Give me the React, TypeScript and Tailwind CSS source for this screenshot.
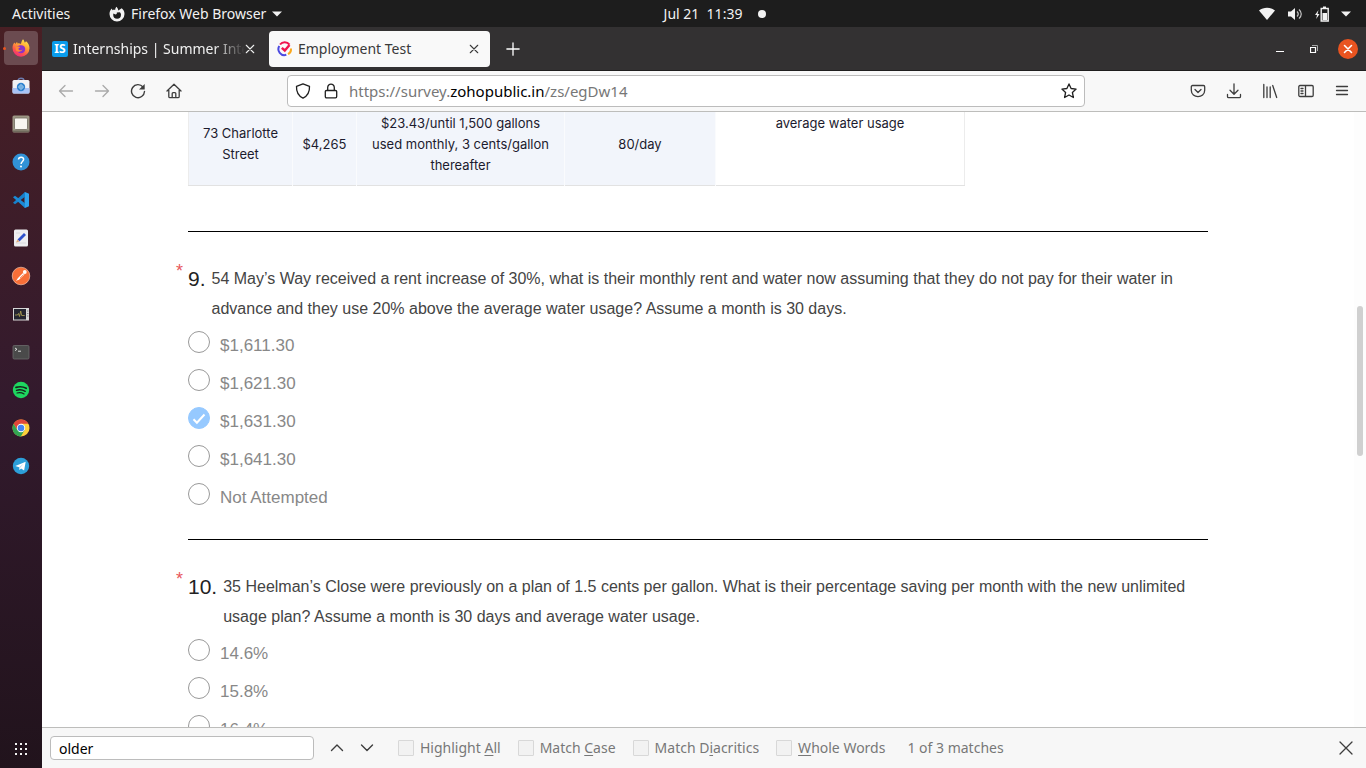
import { useState, type ReactNode } from "react";

const ubuntu = "font-['Noto_Sans','Open_Sans',sans-serif]";
const arial = "font-['Liberation_Sans',Arial,sans-serif]";

/* ---------- dock icons ---------- */

function FirefoxIcon() {
  return (
    <svg width="20" height="20" viewBox="0 0 20 20">
      <defs>
        <linearGradient id="fx" x1="0.8" y1="0" x2="0.3" y2="1">
          <stop offset="0" stopColor="#fff04a" />
          <stop offset="0.4" stopColor="#ffa436" />
          <stop offset="0.7" stopColor="#ff5a4a" />
          <stop offset="1" stopColor="#f02a7c" />
        </linearGradient>
      </defs>
      <path
        d="M12 1.2c1 1.2 1.5 2.2 1.6 3.4 1.4-.3 1.2-1 1.2-1.6 2.400 2 3.700 4.500 3.700 7.300A8.500 8.500 0 1 1 1.500 10c0-2.600.8-4.300 2-5.600l.9 1.500c.4-1 1-1.500 1.800-2l.2 1.500c1.500-.4 2.700 0 3.500.7.400-1.700.6-3.200 2.100-4.900z"
        fill="url(#fx)"
      />
      <path d="M5.500 8.500 9 7.300c3-.6 5.200 1.200 5.200 3.700A4.300 4.300 0 0 1 10 15.200c-2.500 0-4.400-1.800-4.500-4.200z" fill="#8a32c9" />
      <path d="M4.500 8.300c2.200-.2 3 .1 4.700.7-.4 1-1.600 1-1.800 1.900.4 1.500 2.600 1.700 4 .7-.8 2.300-4.600 3.200-6.500.6z" fill="#ff8a35" />
    </svg>
  );
}

function BagIcon() {
  return (
    <svg width="20" height="20" viewBox="0 0 20 20">
      <path d="M7 4.500C7 1.500 13 1.500 13 4.500" fill="none" stroke="#6d7cae" strokeWidth="1.300" />
      <rect x="1.500" y="4" width="17" height="13.500" rx="1.500" fill="#f1f2f5" />
      <path d="M1.500 12h17v4a1.500 1.500 0 0 1-1.500 1.500H3A1.500 1.500 0 0 1 1.500 16z" fill="#a9c3f5" />
      <circle cx="10" cy="11" r="4.200" fill="#2f83cf" />
      <circle cx="10" cy="11" r="2" fill="none" stroke="#a8d0f0" strokeWidth=".7" />
      <path d="M10 8v6M7 11h6" stroke="#a8d0f0" strokeWidth=".7" />
    </svg>
  );
}

function FilesIcon() {
  return (
    <svg width="20" height="20" viewBox="0 0 20 20">
      <rect x="1.500" y="1.500" width="17" height="17" rx="1.500" fill="#9b9583" />
      <rect x="2" y="16.500" width="16" height="1.500" fill="#6f6a5c" />
      <rect x="3.500" y="4" width="13" height="11.500" rx="1.200" fill="#f8f6f1" stroke="#716c60" strokeWidth=".8" />
    </svg>
  );
}

function HelpIcon() {
  return (
    <svg width="20" height="20" viewBox="0 0 20 20">
      <circle cx="10" cy="10" r="8.500" fill="#3192d8" />
      <path d="M7.500 7.500C7.700 4.300 13 4.500 12.600 7.700c-.2 1.700-2.500 2-2.500 4.300" fill="none" stroke="#fff" strokeWidth="1.500" />
      <circle cx="10" cy="14.500" r="1" fill="#fff" />
    </svg>
  );
}

function CodeIcon() {
  return (
    <svg width="20" height="20" viewBox="0 0 20 20">
      <path d="M14 2 18 3.800v12.400L14 18l-.5-.8V2.800z" fill="#2ea3ec" />
      <path d="M14 2v4.700L4 14.300l-2-1.600z" fill="#1681cc" />
      <path d="M14 18v-4.700L4 5.700 2 7.300z" fill="#1b8bd6" />
    </svg>
  );
}

function EditorIcon() {
  return (
    <svg width="20" height="20" viewBox="0 0 20 20">
      <rect x="3" y="1.500" width="14" height="17" rx="1.500" fill="#eeeef0" />
      <path d="M5 15h10M5 5h4" stroke="#d3d3d8" strokeWidth=".8" />
      <path d="m6.500 11.500 6.500-6.500 2 2-6.500 6.500z" fill="#2f52cc" />
      <path d="m5 14.500 1.500-3 2 2z" fill="#e2a979" />
    </svg>
  );
}

function PostmanIcon() {
  return (
    <svg width="20" height="20" viewBox="0 0 20 20">
      <circle cx="10" cy="10" r="8.800" fill="#f86f38" stroke="#ffd3bd" strokeWidth=".6" />
      <path d="m5 15 2-3 5-5 1.500 1.500-5 4.700z" fill="#fff" />
      <circle cx="13.800" cy="6" r="1.900" fill="#fff" />
      <path d="m9 12 3.500-3.500" stroke="#f86f38" strokeWidth=".7" />
    </svg>
  );
}

function MonitorIcon() {
  return (
    <svg width="20" height="20" viewBox="0 0 20 20">
      <rect x="2" y="4" width="16" height="12.500" fill="#d8d8d8" />
      <rect x="3" y="5" width="12" height="10.500" fill="#252631" />
      <path d="M4 11h2.500l1-1.500 1 3L9.700 7l1 4.500h3" fill="none" stroke="#b3a653" strokeWidth=".8" />
      <path d="M16 7h1.500M16 9.500h1.500M16 12h1.500" stroke="#77777b" strokeWidth=".8" />
    </svg>
  );
}

function TerminalIcon() {
  return (
    <svg width="20" height="20" viewBox="0 0 20 20">
      <rect x="2" y="3.500" width="16" height="13.500" rx="1.200" fill="#4a4a4a" stroke="#6c6c6c" strokeWidth=".8" />
      <path d="m4 6 2 1.300L4 8.600M7 9.200h3" fill="none" stroke="#eee" strokeWidth=".9" />
    </svg>
  );
}

function SpotifyIcon() {
  return (
    <svg width="20" height="20" viewBox="0 0 20 20">
      <circle cx="10" cy="10" r="8.200" fill="#1ed760" />
      <g fill="none" stroke="#15251b" strokeLinecap="round">
        <path d="M5 7.400c3.300-1 7.300-.7 10.200.9" strokeWidth="1.700" />
        <path d="M5.500 10.300c2.800-.8 6.200-.4 8.700 1" strokeWidth="1.400" />
        <path d="M6 13c2.400-.6 5-.3 7.100.9" strokeWidth="1.100" />
      </g>
    </svg>
  );
}

function ChromeIcon() {
  return (
    <svg width="20" height="20" viewBox="0 0 20 20">
      <circle cx="10" cy="10" r="8.500" fill="#fdd03b" />
      <path d="M2.600 5.800A8.500 8.500 0 0 1 17.400 5.800H10L6.400 12.100z" fill="#e0463a" />
      <path d="M2.600 5.800A8.500 8.500 0 0 0 9.800 18.500l3.800-6.400H6.400z" fill="#33a553" />
      <circle cx="10" cy="10" r="4.200" fill="#fff" />
      <circle cx="10" cy="10" r="3.300" fill="#4584ef" />
    </svg>
  );
}

function TelegramIcon() {
  return (
    <svg width="20" height="20" viewBox="0 0 20 20">
      <circle cx="10" cy="10" r="8.200" fill="#2c9fd9" />
      <path d="m4.300 10 10.400-4.200-1.600 8.700-3-2.100-1.600 1.500-.4-2.600z" fill="#fff" />
      <path d="m8.100 11.300 4.500-3.600-3.600 4.200-.5 2z" fill="#b5d9ed" />
    </svg>
  );
}

const dockItems: { name: string; icon: ReactNode }[] = [
  { name: "Firefox", icon: <FirefoxIcon /> },
  { name: "Software", icon: <BagIcon /> },
  { name: "Files", icon: <FilesIcon /> },
  { name: "Help", icon: <HelpIcon /> },
  { name: "Code", icon: <CodeIcon /> },
  { name: "Text Editor", icon: <EditorIcon /> },
  { name: "Postman", icon: <PostmanIcon /> },
  { name: "System Monitor", icon: <MonitorIcon /> },
  { name: "Terminal", icon: <TerminalIcon /> },
  { name: "Spotify", icon: <SpotifyIcon /> },
  { name: "Chrome", icon: <ChromeIcon /> },
  { name: "Telegram", icon: <TelegramIcon /> },
];

/* ---------- shared pieces ---------- */

function Line({ d, w = 1.3, size = 16 }: { d: string; w?: number; size?: number }) {
  return (
    <svg width={size} height={size} viewBox="0 0 16 16" fill="none" stroke="currentColor" strokeWidth={w} strokeLinecap="round" strokeLinejoin="round">
      <path d={d} />
    </svg>
  );
}

function ToolButton({ label, children, dim = false }: { label: string; children: ReactNode; dim?: boolean }) {
  return (
    <button aria-label={label} className={`flex h-8 w-9 items-center justify-center ${dim ? "text-[#aaaaaa]" : "text-[#3d3d3d]"}`}>
      {children}
    </button>
  );
}

function Caret() {
  return (
    <svg width="10" height="6" viewBox="0 0 10 6">
      <path d="M0 .5h10L5 5.500z" fill="#f2f2f2" />
    </svg>
  );
}

const CROSS = "M4 4l8 8M12 4l-8 8";

/* ---------- desktop chrome ---------- */

function TopBar() {
  return (
    <header className="grid h-[27px] shrink-0 grid-cols-[1fr_auto_1fr] items-center bg-[#1d1d1d] text-sm text-[#f2f2f2]">
      <div className="flex items-center pl-3">
        <button className="w-[97px] text-left">Activities</button>
        <button className="flex items-center gap-[6px]">
          <svg width="16" height="16" viewBox="0 0 16 16">
            <path d="M7.500.8C9 2.500 9 3.300 9.300 4.500L12.700 2.300C14.600 3.700 15.500 5.800 15.500 8A7.500 7.500 0 0 1 .5 8C.5 5.500 1.500 3.800 3 2.600l.3 1.700c1-.5 2-.6 2.900-.3C6.200 2.700 6.600 1.700 7.500.8z" fill="#f2f2f2" />
            <path d="M4.400 7.500 6.500 8.500c1.200-.2 1.600-.8 1.300-2l2.900-.2c1 .7 1.300 1.600 1.300 2.500a3.900 3.900 0 0 1-7.800 0z" fill="#1d1d1d" />
          </svg>
          <span>Firefox Web Browser</span>
          <Caret />
        </button>
      </div>
      <button className="flex items-center gap-4 pl-16">
        <span className="whitespace-pre">Jul 21  11:39</span>
        <span className="size-2 rounded-full bg-[#f2f2f2]" />
      </button>
      <button aria-label="System menu" className="flex items-center justify-end gap-3 pr-[15px]">
        <svg width="16" height="14" viewBox="0 0 16 14">
          <path d="M0 3.500C4.500-.3 11.500-.3 16 3.500L8 13z" fill="#f2f2f2" />
        </svg>
        <svg width="16" height="14" viewBox="0 0 16 14">
          <path d="M1 4.500h3L8 1v12L4 9.500H1z" fill="#f2f2f2" />
          <path d="M10 4.500c1.500 1.500 1.500 3.500 0 5M12 2.500c3 2.700 3 6.300 0 9" fill="none" stroke="#c4c4c4" strokeWidth="1.200" />
        </svg>
        <svg width="14" height="16" viewBox="0 0 14 16">
          <path d="M3.500 4 0 9h2l-.8 4L4.500 8h-2z" fill="#f2f2f2" />
          <path d="M8 .5h3V2H8z" fill="#f2f2f2" />
          <path d="M6.200 2.500h7v12.500h-7z" fill="none" stroke="#f2f2f2" strokeWidth="1.400" />
          <path d="M7.500 7h4.500v7H7.500z" fill="#f2f2f2" />
        </svg>
        <Caret />
      </button>
    </header>
  );
}

function Dock() {
  return (
    <nav className="flex w-[42px] shrink-0 flex-col items-center gap-1 bg-linear-to-b from-[#481f24] via-[#331a2d] to-[#21131c] py-1">
      {dockItems.map((item, i) => (
        <button key={item.name} aria-label={item.name} className={`relative flex size-[34px] shrink-0 items-center justify-center rounded-[4px] ${i === 0 ? "bg-[#6b4b50]" : ""}`}>
          {item.icon}
          {i === 0 && <span className="absolute -left-px size-[3px] rounded-full bg-[#e95420]" />}
        </button>
      ))}
      <button aria-label="Show applications" className="mt-auto mb-[7px] flex h-4 items-center justify-center">
        <svg width="12" height="12" viewBox="0 0 12 12" fill="#f2f2f2">
          {[0, 5, 10].map((y) => [0, 5, 10].map((x) => <rect key={`${x}-${y}`} x={x} y={y} width="2" height="2" />))}
        </svg>
      </button>
    </nav>
  );
}

function TabStrip() {
  return (
    <div className="flex h-11 shrink-0 items-center gap-[2px] border-b border-[#1f1e1e] bg-[#333132] pt-px pl-1 pr-2 text-sm">
      <div className="flex h-9 w-[221px] items-center pr-3 pl-[6px] text-[#f0f0f0]">
        <span className="mr-[5px] flex size-4 shrink-0 items-center justify-center rounded-[2px] bg-[#0a9cec] text-xs font-bold text-white">IS</span>
        <span className="min-w-0 flex-1 overflow-hidden whitespace-nowrap [mask-image:linear-gradient(to_right,black_82%,transparent)]">Internships | Summer Internship</span>
        <button aria-label="Close tab" className="shrink-0">
          <Line d="M2 2l12 12M14 2 2 14" w={1.7} size={10} />
        </button>
      </div>
      <div className="flex h-9 w-[221px] items-center rounded-[4px] bg-[#f9f9f9] pr-[11px] pl-2 text-[#3a3a3a]">
        <svg width="16" height="16" viewBox="0 0 16 16" fill="none" className="mr-[5px] shrink-0">
          <path d="M3 3.500A6 6 0 0 1 12.500 3.600" stroke="#f0154f" strokeWidth="2" />
          <path d="M2.300 5A6 6 0 0 0 9.300 13.800" stroke="#4b49e0" strokeWidth="2" />
          <path d="M14 7.500A6 6 0 0 1 11 13.200" stroke="#fba81c" strokeWidth="2" />
          <path d="m4.800 6.800 3 2.700L12.500 4" stroke="#f0154f" strokeWidth="2.400" />
        </svg>
        <span className="flex-1">Employment Test</span>
        <button aria-label="Close tab">
          <Line d="M2 2l12 12M14 2 2 14" w={1.7} size={10} />
        </button>
      </div>
      <button aria-label="New tab" className="ml-[14px] text-white">
        <Line d="M8 1v14M1 8h14" w={1.5} size={14} />
      </button>
      <div className="ml-auto flex items-center gap-[14px] text-white">
        <button aria-label="Minimize" className="flex size-5 items-center justify-center">
          <svg width="8" height="8" viewBox="0 0 8 8"><path d="M0 6h8v1H0z" fill="#fff" /></svg>
        </button>
        <button aria-label="Restore" className="flex size-5 items-center justify-center">
          <svg width="8" height="8" viewBox="0 0 8 8" fill="none">
            <path d="M.5 2.500h5v5h-5z" stroke="#fff" strokeWidth="1.200" />
            <path d="M2 .5h5.500V6" stroke="#a8a8a8" />
          </svg>
        </button>
        <button aria-label="Close" className="flex size-5 items-center justify-center rounded-full bg-[#e95420]">
          <Line d={CROSS} w={1.8} size={14} />
        </button>
      </div>
    </div>
  );
}

function AddressBar() {
  return (
    <div className="flex h-[41px] shrink-0 items-center border-b border-[#bdbdbb] bg-[#f8f8f8] px-[6px]">
      <ToolButton label="Back" dim><Line d="M14.500 8H1.500M7 2.500 1.500 8 7 13.500" /></ToolButton>
      <ToolButton label="Forward" dim><Line d="M1.500 8h13M9 2.500 14.500 8 9 13.500" /></ToolButton>
      <ToolButton label="Reload">
        <svg width="16" height="16" viewBox="0 0 16 16" fill="none">
          <path d="M13 4A6.500 6.500 0 1 0 14.500 8.500" stroke="currentColor" strokeWidth="1.400" strokeLinecap="round" />
          <path d="M14.700 1v5.500H9z" fill="currentColor" />
        </svg>
      </ToolButton>
      <ToolButton label="Home"><Line d="M1 8 8 1.300 15 8M2.800 7v6.500c0 .7.400 1.200 1.200 1.200h8c.8 0 1.200-.5 1.200-1.200V7M6.200 14.500v-4c0-.6.300-.9.900-.9h1.800c.6 0 .9.300.9.900v4" /></ToolButton>
      <div className="flex-[95]" />
      <div className="flex h-8 flex-[782] items-center rounded-[4px] border border-[#bcbcbc] bg-white px-[7px] text-[#1f1f1f]">
        <button aria-label="Tracking protection"><Line d="M8 .8 14.500 3.300C14.800 9 12.500 13 8 15.200 3.500 13 1.200 9 1.500 3.300z" /></button>
        <button aria-label="Site security" className="ml-3"><Line d="M3.500 7.500h9c.7 0 1.200.4 1.200 1.100v5c0 .7-.5 1.200-1.200 1.200h-9c-.7 0-1.200-.5-1.200-1.200v-5c0-.7.500-1.100 1.200-1.100zM4.700 7V4.500c0-4.500 6.600-4.500 6.600 0V7" /></button>
        <div role="textbox" aria-label="Address" className="ml-[10px] flex-1 text-[15px] text-[#777777]">
          https://survey.<span className="text-black">zohopublic.in</span>/zs/egDw14
        </div>
        <button aria-label="Bookmark"><Line d="m8 .9 2.100 4.600 5 .6-3.700 3.400 1 5L8 12l-4.400 2.500 1-5L.9 6.100l5-.6z" /></button>
      </div>
      <div className="flex-[95]" />
      <ToolButton label="Pocket"><Line d="M2.500 2.500h11c.7 0 1.200.5 1.200 1.200v3.500c0 8.500-13.400 8.500-13.400 0V3.700c0-.7.500-1.200 1.200-1.200zM5 6.500l3 3 3-3" /></ToolButton>
      <ToolButton label="Downloads"><Line d="M8 .8v10M4 7.200l4 4 4-4M1.500 11.500v2c0 .7.500 1.200 1.200 1.200h10.600c.7 0 1.200-.5 1.200-1.200v-2" /></ToolButton>
      <ToolButton label="Library"><Line d="M1.800 1.500v13M5 4v10.500M8.200 4v10.500M10.700 2.500l4 12" /></ToolButton>
      <ToolButton label="Sidebars"><Line d="M2 2.500h12c.7 0 1.200.5 1.200 1.200v8.600c0 .7-.5 1.200-1.200 1.200H2c-.7 0-1.200-.5-1.200-1.200V3.700c0-.7.500-1.200 1.200-1.200zM7.500 2.500v11M3 5.500h2M3 8h2M3 10.500h2" /></ToolButton>
      <ToolButton label="Menu"><Line d="M2.500 3.500h11M2.500 7.500h11M2.500 11.500h11" /></ToolButton>
    </div>
  );
}

/* ---------- survey ---------- */

type QuestionData = { number: number; text: string; options: string[] };

const questions: QuestionData[] = [
  {
    number: 9,
    text: "54 May’s Way received a rent increase of 30%, what is their monthly rent and water now assuming that they do not pay for their water in advance and they use 20% above the average water usage? Assume a month is 30 days.",
    options: ["$1,611.30", "$1,621.30", "$1,631.30", "$1,641.30", "Not Attempted"],
  },
  {
    number: 10,
    text: "35 Heelman’s Close were previously on a plan of 1.5 cents per gallon. What is their percentage saving per month with the new unlimited usage plan? Assume a month is 30 days and average water usage.",
    options: ["14.6%", "15.8%", "16.4%"],
  },
];

function Question({ q, initial }: { q: QuestionData; initial?: string }) {
  const [value, setValue] = useState(initial);
  return (
    <fieldset className="border-t border-black pt-8 pb-[22px]">
      <div className="flex leading-[30px]">
        <span className="-ml-3 w-3 text-lg leading-[14px] text-[#e8575c]">*</span>
        <span className="mr-[6px] text-[21px] text-[#222222]">{q.number}.</span>
        <p className="flex-1 text-base leading-[30px] text-[#444444]">{q.text}</p>
      </div>
      <div className="mt-[3px]">
        {q.options.map((option) => (
          <label key={option} className="flex h-[38px] items-center gap-[10px] text-[17px] text-[#888888]">
            <span className="relative mb-2 flex size-[22px]">
              <input
                type="radio"
                name={`question-${q.number}`}
                checked={value === option}
                onChange={() => setValue(option)}
                className="peer size-[22px] appearance-none rounded-full border border-[#999999] checked:border-[#96c9ff] checked:bg-[#96c9ff]"
              />
              <svg className="pointer-events-none absolute inset-0 hidden peer-checked:block" viewBox="0 0 22 22" fill="none">
                <path d="m5.500 12.200 3.400 3.500L16.500 7.500" stroke="#fff" strokeWidth="2" />
              </svg>
            </span>
            {option}
          </label>
        ))}
      </div>
    </fieldset>
  );
}

function RentTable() {
  const cell = "border-r border-[#fafbfd] bg-[#f2f5fb] px-2 align-middle";
  return (
    <table className="-mt-2 w-[777px] table-fixed border-x border-b border-x-[#ececec] border-b-[#e2e2e2] text-center font-[Inter,sans-serif] text-[13px] leading-[21px] text-[#1c1b2e]">
      <colgroup>
        <col className="w-[104px]" />
        <col className="w-[64px]" />
        <col className="w-[208px]" />
        <col className="w-[151px]" />
        <col />
      </colgroup>
      <tbody>
        <tr className="h-[81px]">
          <td className={cell}>73 Charlotte Street</td>
          <td className={cell}>$4,265</td>
          <td className={cell}>$23.43/until 1,500 gallons used monthly, 3 cents/gallon thereafter</td>
          <td className={cell}>80/day</td>
          <td className="pt-[9px] align-top">average water usage</td>
        </tr>
      </tbody>
    </table>
  );
}

function Page() {
  return (
    <main className={`flex min-h-0 flex-1 overflow-hidden bg-white ${arial}`}>
      <div className="min-w-0 flex-1 px-6">
        <div className="mx-auto max-w-[1020px]">
          <RentTable />
          <div className="mt-[45px]">
            <Question q={questions[0]} initial="$1,631.30" />
            <Question q={questions[1]} />
          </div>
        </div>
      </div>
      <div className="flex w-3 shrink-0 justify-center bg-[#fdfdfd] pt-[194px]">
        <div className="h-[150px] w-[6px] rounded-full bg-[#d0d0d0]" />
      </div>
    </main>
  );
}

function FindOption({ before = "", mnemonic, after }: { before?: string; mnemonic: string; after: string }) {
  return (
    <label className="flex items-center gap-[6px]">
      <input type="checkbox" className="size-4 appearance-none rounded-[1px] border border-[#d8d8d8] bg-[#f2f2f2]" />
      <span>
        {before}
        <span className="underline underline-offset-2">{mnemonic}</span>
        {after}
      </span>
    </label>
  );
}

function FindBar() {
  return (
    <footer className="flex h-[41px] shrink-0 items-center border-t border-[#bdbdbb] bg-[#f7f7f7] pr-3 pl-2 text-sm whitespace-nowrap text-[#777777]">
      <input aria-label="Find in page" defaultValue="older" className="h-6 w-[264px] rounded-[4px] border border-[#bcbcbc] bg-white px-2 text-black outline-none" />
      <div className="ml-2 flex text-[#3d3d3d]">
        <button aria-label="Previous match" className="flex h-6 w-[30px] items-center justify-center"><Line d="m2.500 10.500 5.500-5.500 5.500 5.500" w={1.4} /></button>
        <button aria-label="Next match" className="flex h-6 w-[30px] items-center justify-center"><Line d="m2.500 5 5.500 5.500L13.500 5" w={1.4} /></button>
      </div>
      <div className="ml-4 flex gap-[17px]">
        <FindOption before="Highlight " mnemonic="A" after="ll" />
        <FindOption before="Match " mnemonic="C" after="ase" />
        <FindOption before="Match D" mnemonic="i" after="acritics" />
        <FindOption mnemonic="W" after="hole Words" />
      </div>
      <span className="ml-[22px]">1 of 3 matches</span>
      <button aria-label="Close find bar" className="ml-auto text-[#3d3d3d]"><Line d="M2 2l12 12M14 2 2 14" /></button>
    </footer>
  );
}

export default function App() {
  return (
    <div className={`flex h-screen flex-col overflow-hidden ${ubuntu}`}>
      <TopBar />
      <div className="flex min-h-0 flex-1">
        <Dock />
        <div className="flex min-w-0 flex-1 flex-col">
          <TabStrip />
          <AddressBar />
          <Page />
          <FindBar />
        </div>
      </div>
    </div>
  );
}
